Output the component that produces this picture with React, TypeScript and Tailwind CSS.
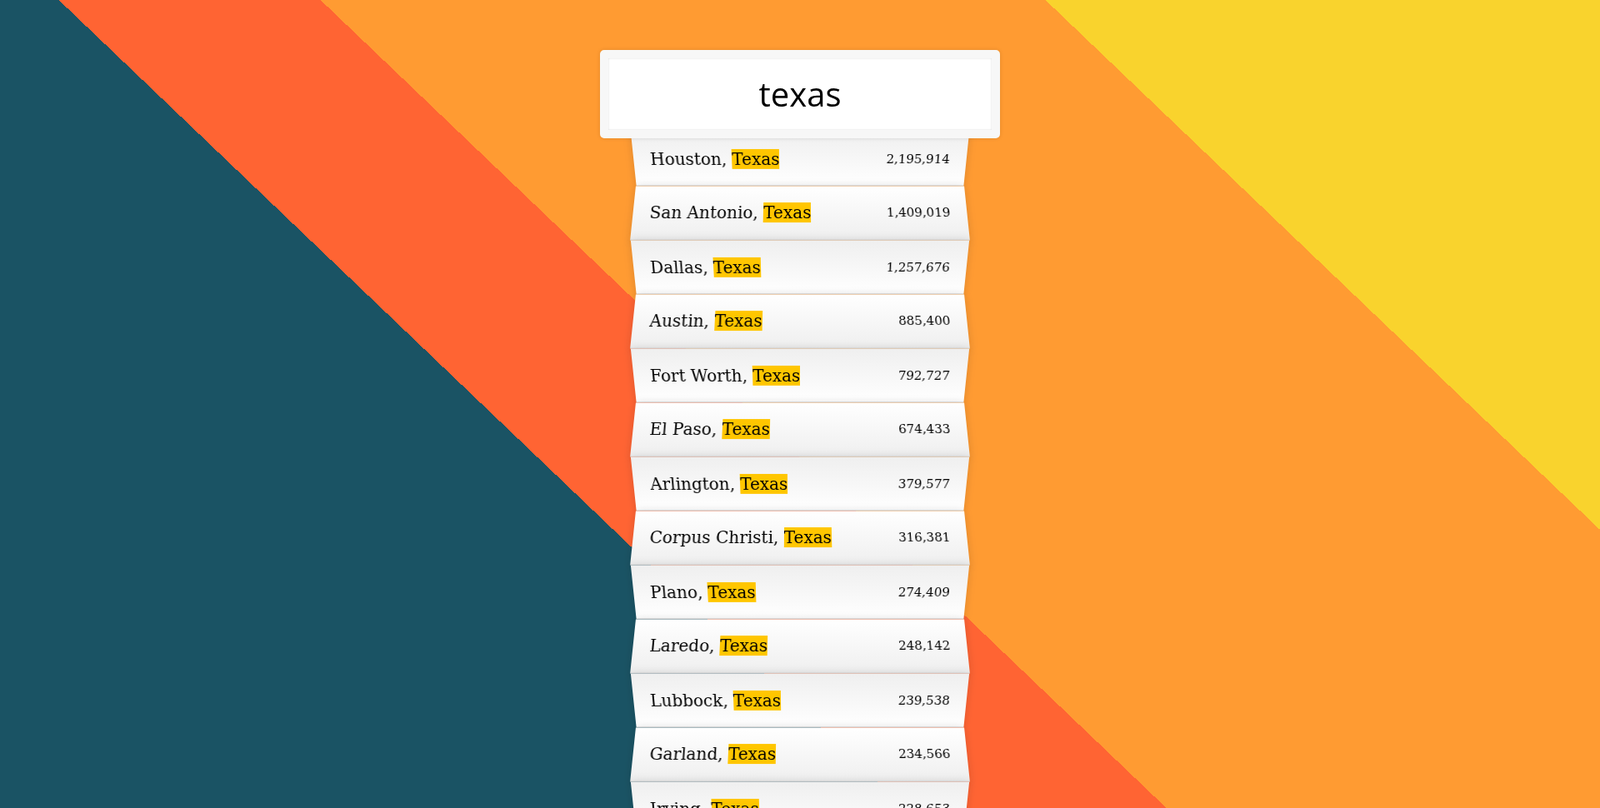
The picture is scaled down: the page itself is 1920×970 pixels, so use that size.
import React from "react";

const cities: [string, string][] = [
  ["Houston", "2,195,914"],
  ["San Antonio", "1,409,019"],
  ["Dallas", "1,257,676"],
  ["Austin", "885,400"],
  ["Fort Worth", "792,727"],
  ["El Paso", "674,433"],
  ["Arlington", "379,577"],
  ["Corpus Christi", "316,381"],
  ["Plano", "274,409"],
  ["Laredo", "248,142"],
  ["Lubbock", "239,538"],
  ["Garland", "234,566"],
  ["Irving", "228,653"],
  ["Amarillo", "196,429"],
  ["Grand Prairie", "183,372"],
];

export default function App() {
  return (
    <div className="h-screen overflow-hidden bg-[linear-gradient(43.7deg,#1a5364_750px,#ff6433_750px,#ff6433_967px,#ff9b32_967px,#ff9b32_1568px,#f9d32d_1568px)] font-['DejaVu_Serif',serif] text-[20px] font-extralight text-black">
      <form className="max-w-[400px] mx-auto my-[50px]" onSubmit={(e) => e.preventDefault()}>
        <input
          className="relative top-[10px] left-[-10%] z-[2] m-0 block w-[120%] rounded-[5px] border-[10px] border-solid border-[#F7F7F7] bg-white p-[20px] text-center font-['Open_Sans','DejaVu_Sans',sans-serif] text-[40px] font-normal leading-[46px] text-black outline-0 shadow-[0_0_5px_rgba(0,0,0,0.12),inset_0_0_2px_rgba(0,0,0,0.19)]"
          type="text"
          value="texas"
          readOnly
        />
        <ul className="relative m-0 p-0">
          {cities.map(([city, pop], i) => (
            <li
              key={city}
              className={
                "m-0 flex list-none justify-between border-b border-solid border-[#D8D8D8] p-[20px] leading-[24px] capitalize shadow-[0_0_10px_rgba(0,0,0,0.14)] " +
                (i % 2 === 0
                  ? "bg-[linear-gradient(to_top,#ffffff_0%,#EFEFEF_100%)] [transform:perspective(100px)_rotateX(-3deg)_translateY(3px)]"
                  : "bg-[linear-gradient(to_bottom,#ffffff_0%,#EFEFEF_100%)] [transform:perspective(100px)_rotateX(3deg)_translateY(2px)_scale(1.001)]")
              }
            >
              <span className="name">
                {city}, <span className="bg-[#ffc600]">Texas</span>
              </span>
              <span className="text-[15px]">{pop}</span>
            </li>
          ))}
        </ul>
      </form>
    </div>
  );
}
